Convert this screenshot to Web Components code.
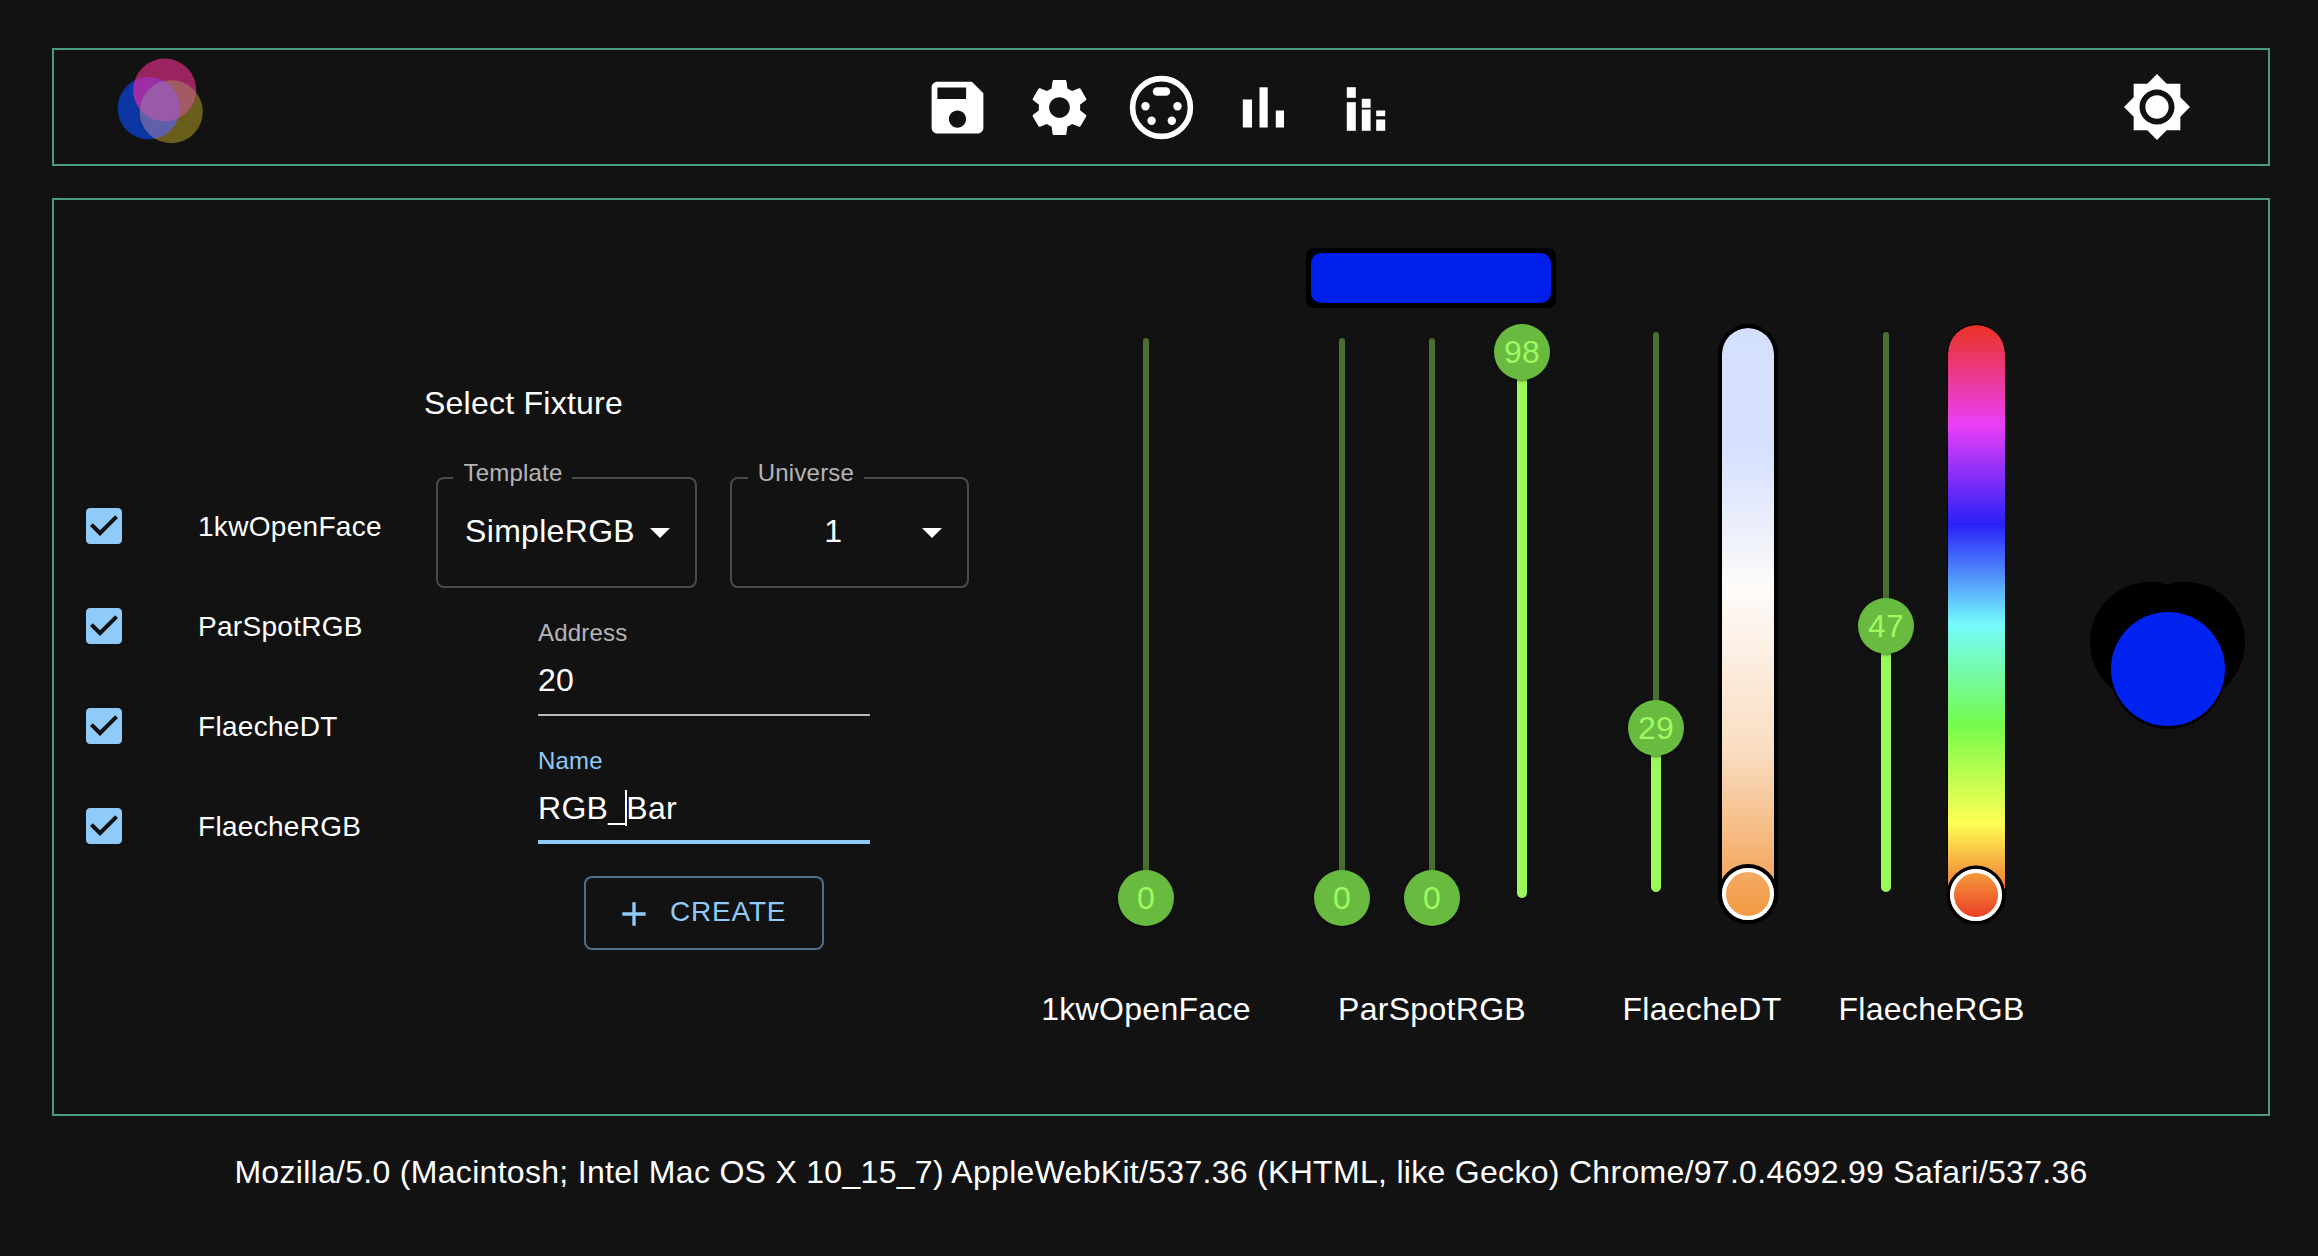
<!DOCTYPE html>
<html lang="en">
<head>
<meta charset="utf-8">
<title>Fixtures</title>
<style>
html,body{margin:0;padding:0;background:#121212;overflow:hidden}
body{height:1256px}
</style>
</head>
<body>
<fx-app></fx-app>
<script>
function def(name, css, html, attrs){
  customElements.define(name, class extends HTMLElement{
    connectedCallback(){
      if(this.shadowRoot) return;
      const root=this.attachShadow({mode:'open'});
      root.innerHTML='<style>'+css+'</style>'+html(this);
    }
  });
}
const ICONS={
  save:'<path fill="#fff" d="M17 3H5c-1.11 0-2 .9-2 2v14c0 1.1.89 2 2 2h14c1.1 0 2-.9 2-2V7l-4-4zm-5 16c-1.66 0-3-1.34-3-3s1.34-3 3-3 3 1.34 3 3-1.34 3-3 3zm3-10H5V5h10v4z"/>',
  gear:'<path fill="#fff" d="M19.14 12.94c.04-.3.06-.61.06-.94 0-.32-.02-.64-.07-.94l2.03-1.58c.18-.14.23-.41.12-.61l-1.92-3.32c-.12-.22-.37-.29-.59-.22l-2.39.96c-.5-.38-1.03-.7-1.62-.94l-.36-2.54c-.04-.24-.24-.41-.48-.41h-3.84c-.24 0-.43.17-.47.41l-.36 2.54c-.59.24-1.13.57-1.62.94l-2.39-.96c-.22-.08-.47 0-.59.22L2.74 8.87c-.12.21-.08.47.12.61l2.03 1.58c-.05.3-.09.63-.09.94s.02.64.07.94l-2.03 1.58c-.18.14-.23.41-.12.61l1.92 3.32c.12.22.37.29.59.22l2.39-.96c.5.38 1.03.7 1.62.94l.36 2.54c.05.24.24.41.48.41h3.84c.24 0 .44-.17.47-.41l.36-2.54c.59-.24 1.13-.56 1.62-.94l2.39.96c.22.08.47 0 .59-.22l1.92-3.32c.12-.22.07-.47-.12-.61l-2.01-1.58zM12 15.6c-1.98 0-3.6-1.62-3.6-3.6s1.62-3.6 3.6-3.6 3.6 1.62 3.6 3.6-1.62 3.6-3.6 3.6z"/>',
  sun:'<path fill="#fff" d="M20 8.69V4h-4.69L12 .69 8.69 4H4v4.69L.69 12 4 15.31V20h4.69L12 23.31 15.31 20H20v-4.69L23.31 12 20 8.69zM12 18c-3.31 0-6-2.69-6-6s2.69-6 6-6 6 2.69 6 6-2.69 6-6 6zm0-10c-2.21 0-4 1.79-4 4s1.79 4 4 4 4-1.79 4-4-1.79-4-4-4z"/>'
};
const PX={
  dmx:'<circle cx="34.5" cy="34.5" r="28.9" fill="none" stroke="#fff" stroke-width="5.6"/><rect x="25.8" y="14.2" width="17.4" height="8.6" rx="4.3" fill="#fff"/><circle cx="18.5" cy="33.2" r="4.2" fill="#fff"/><circle cx="50.5" cy="33.2" r="4.2" fill="#fff"/><circle cx="24.6" cy="47.8" r="4.2" fill="#fff"/><circle cx="44.8" cy="47.8" r="4.2" fill="#fff"/>',
  bars:'<g fill="#fff"><rect x="13.8" y="26.5" width="9.2" height="28"/><rect x="30.5" y="14.3" width="8.2" height="40.2"/><rect x="46.8" y="37.5" width="8.2" height="17"/></g>',
  levels:'<g fill="#fff"><rect x="15.8" y="14.2" width="9" height="10.6"/><rect x="15.8" y="29.2" width="9" height="28.6"/><rect x="30.8" y="25.8" width="8.8" height="9"/><rect x="30.8" y="36.5" width="8.8" height="21.3"/><rect x="45.2" y="37.5" width="9" height="5.7"/><rect x="45.2" y="46.5" width="9" height="11.3"/></g>'
};

def('fx-icon',':host{display:block;flex:none;line-height:0}svg{display:block}',h=>{
  const n=h.getAttribute('name'), s=h.getAttribute('size')||69;
  return ICONS[n]?`<svg width="${s}" height="${s}" viewBox="0 0 24 24">${ICONS[n]}</svg>`
                 :`<svg width="${s}" height="${s}" viewBox="0 0 69 69">${PX[n]}</svg>`;
});

def('fx-logo',':host{display:block;margin-left:46px;line-height:0}',()=>`
<svg width="120" height="114" viewBox="0 0 120 114">
<defs>
<clipPath id="p"><circle cx="64.7" cy="40" r="31.5"/></clipPath>
<clipPath id="b"><circle cx="48.8" cy="58.2" r="31.2"/></clipPath>
</defs>
<circle cx="48.8" cy="58.2" r="31.2" fill="#0a35a2"/>
<circle cx="71.3" cy="61.7" r="31.5" fill="#6a5e1c"/>
<circle cx="64.7" cy="40" r="31.5" fill="#9b235f"/>
<g clip-path="url(#p)"><circle cx="48.8" cy="58.2" r="31.2" fill="#9c2fa6"/><circle cx="71.3" cy="61.7" r="31.5" fill="#a35a62"/></g>
<g clip-path="url(#b)"><circle cx="71.3" cy="61.7" r="31.5" fill="#6060aa"/></g>
<g clip-path="url(#b)"><g clip-path="url(#p)"><circle cx="71.3" cy="61.7" r="31.5" fill="#9a5aa8"/></g></g>
</svg>`);

def('fx-topbar',`
:host{display:grid;grid-template-columns:1fr auto 1fr;align-items:center;box-sizing:border-box;height:118px;border:2px solid #4a9a7c}
.mid{display:flex;gap:33px}
.end{justify-self:end;margin-right:76px}`,()=>`
<fx-logo></fx-logo>
<div class="mid">
<fx-icon name="save"></fx-icon><fx-icon name="gear"></fx-icon><fx-icon name="dmx"></fx-icon><fx-icon name="bars"></fx-icon><fx-icon name="levels"></fx-icon>
</div>
<div class="end"><fx-icon name="sun" size="70"></fx-icon></div>`);

def('fx-check-row',`
:host{display:flex;align-items:center;height:36px;font-size:28px;color:#fff;white-space:nowrap}
svg{display:block;width:48px;height:48px;margin:-6px;flex:none}
span{margin-left:76px;line-height:36px;padding-top:1px}`,h=>`
<svg viewBox="0 0 24 24"><path fill="#90caf9" d="M19 3H5c-1.11 0-2 .9-2 2v14c0 1.1.89 2 2 2h14c1.11 0 2-.9 2-2V5c0-1.1-.89-2-2-2zm-9 14l-5-5 1.41-1.41L10 14.17l7.59-7.59L19 8l-9 9z"/></svg>
<span><slot></slot></span>`);

def('fx-list',`
:host{display:flex;flex-direction:column;gap:64px;flex:0 0 338px;padding:308px 0 0 32px;box-sizing:content-box}`,()=>`<slot></slot>`);

def('fx-select',`
:host{display:flex;align-items:center;position:relative;box-sizing:border-box;height:110.6px;border:2px solid #4a4a4a;border-radius:8px;padding-left:26.4px;color:#fff;font-size:32px}
.lab{position:absolute;left:15.4px;top:-18px;padding:0 10px;height:24px;line-height:24px;font-size:24px;letter-spacing:.2px;color:rgba(255,255,255,.7);background:#121212;white-space:nowrap}
.val{flex:1;text-align:center;white-space:nowrap;margin-top:-2px}
svg{display:block;width:48px;height:48px;margin-right:11.5px;flex:none}`,h=>`
<span class="lab">${h.getAttribute('label')}</span>
<span class="val">${h.getAttribute('value')}</span>
<svg viewBox="0 0 24 24"><path fill="#fff" d="M7 10l5 5 5-5z"/></svg>`);

def('fx-field',`
:host{display:block;width:332px;color:#fff}
.lab{display:block;font-size:24px;line-height:30px;letter-spacing:.2px;color:rgba(255,255,255,.7)}
:host([focused]) .lab{color:#90caf9}
.val{display:flex;align-items:center;height:48px;margin-top:9px;font-size:32px;white-space:pre}
.line{height:2px;margin-top:9px;background:rgba(255,255,255,.7)}
:host([focused]) .line{height:4px;margin-top:7px;background:#90caf9}
i{display:inline-block;width:2px;height:36px;background:#fff;margin:0 -1px;vertical-align:-7px;position:relative;z-index:1}`,h=>{
  const v=h.getAttribute('value'),c=h.getAttribute('caret');
  const t=c?v.slice(0,+c)+'<i></i>'+v.slice(+c):v;
  return `<span class="lab">${h.getAttribute('label')}</span><div class="val"><span>${t}</span></div><div class="line"></div>`;
});

def('fx-create',`
:host{display:flex;align-items:center;box-sizing:border-box;width:240px;height:74px;border:2px solid rgba(144,202,249,.5);border-radius:8px;padding-left:28px;color:#90caf9;font-size:28px;letter-spacing:.8px}
svg{display:block;width:40px;height:40px;margin:2px 16px 0 0;flex:none}
span{margin-top:-1px}`,()=>`
<svg viewBox="0 0 24 24"><path fill="#90caf9" d="M19 13h-6v6h-2v-6H5v-2h6V5h2v6h6v2z"/></svg><span>CREATE</span>`);

def('fx-form',`
:host{display:flex;flex-direction:column;align-items:center;flex:0 0 560px;padding-top:183px;color:#fff}
h2{align-self:flex-start;margin:0;font-weight:400;font-size:32px;line-height:40px;letter-spacing:.24px}
.sel{display:flex;gap:33.3px;margin:54px 2.5px 0 0}
.addr{margin-top:30.4px}
.name{margin-top:30px}
fx-create{margin-top:32px}`,()=>`
<h2>Select Fixture</h2>
<div class="sel">
<fx-select label="Template" value="SimpleRGB" style="width:261px"></fx-select>
<fx-select label="Universe" value="1" style="width:239px"></fx-select>
</div>
<fx-field class="addr" label="Address" value="20"></fx-field>
<fx-field class="name" label="Name" value="RGB_Bar" caret="4" focused></fx-field>
<fx-create></fx-create>`);

def('fx-fader',`
:host{display:flex;justify-content:center;width:90px;flex:none}
.track{position:relative;width:6px;height:560px;background:#4a6f2f;border-radius:3px}
.active{position:absolute;left:-2px;bottom:0;width:10px;background:#99fa5a;border-radius:5px}
.thumb{position:absolute;left:50%;width:56px;height:56px;border-radius:50%;background:#68bb3e;color:#9ff962;font-size:32px;line-height:56px;text-align:center;transform:translate(-50%,50%);box-shadow:0 3px 1px -2px rgba(0,0,0,.2),0 2px 2px 0 rgba(0,0,0,.14),0 1px 5px 0 rgba(0,0,0,.12)}`,h=>{
  const o=+h.getAttribute('off');
  return `<div class="track"><div class="active" style="height:${o}px"></div><div class="thumb" style="bottom:${o}px">${h.getAttribute('value')}</div></div>`;
});

def('fx-tone',`
:host{display:block;position:relative;flex:none;box-sizing:border-box;height:600px;border-style:solid;border-color:#000;border-radius:30px;background-clip:padding-box}
:host([kind=dt]){width:60px;border-width:4px;margin-left:17px;background-image:linear-gradient(#d3dffe 0%,#d8e2fe 22%,#fefbf9 44%,#f9dcc0 72%,#f29740 100%)}
:host([kind=rgb]){width:59px;border-width:1.5px;margin-left:15.5px;background-image:linear-gradient(#ea3323 0%,#ea3ff7 16.67%,#2a20f8 33.33%,#75fbfd 50%,#75fb4c 66.67%,#ffff54 83.33%,#ea3323 100%)}
.h{position:absolute;left:50%;bottom:0;box-sizing:border-box;width:52px;height:52px;border:4px solid #fff;border-radius:50%;transform:translateX(-50%);box-shadow:0 0 0 4px #000}
:host([kind=rgb]) .h{bottom:2.5px;box-shadow:0 0 0 3.4px #000}`,()=>`<div class="h"></div>`);

def('fx-swatch',`
:host{display:block;box-sizing:border-box;width:250px;height:60px;padding:5px;background:#000;border-radius:8px}
div{height:100%;background:#001fea;border-radius:10px}`,()=>`<div></div>`);

def('fx-group',`
:host{display:flex;flex-direction:column;align-items:center;justify-content:flex-end;flex:none;color:#fff;font-size:32px}
.row{display:flex;align-items:flex-start;align-self:flex-start}
.lab{height:40px;line-height:40px;white-space:nowrap}
::slotted(fx-swatch){margin:0 2px 30px 0}`,h=>`
<slot name="top"></slot>
<div class="row" style="padding-bottom:${h.getAttribute('low')}px"><slot></slot></div>
<div class="lab" style="margin-top:${h.getAttribute('gap')}px">${h.getAttribute('label')}</div>`);

def('fx-picker',`
:host{display:block;flex:none;line-height:0}`,()=>`
<svg width="156" height="150" viewBox="0 0 156 150">
<circle cx="60" cy="60" r="60" fill="#000"/><circle cx="95" cy="60" r="60" fill="#000"/><circle cx="78" cy="89" r="58" fill="#000"/>
<circle cx="78" cy="87" r="57" fill="#0023f0"/></svg>`);

def('fx-main',`
:host{display:flex;align-items:flex-start;box-sizing:border-box;height:918px;margin-top:32px;border:2px solid #4a9a7c}`,()=>`
<fx-list>
<fx-check-row>1kwOpenFace</fx-check-row>
<fx-check-row>ParSpotRGB</fx-check-row>
<fx-check-row>FlaecheDT</fx-check-row>
<fx-check-row>FlaecheRGB</fx-check-row>
</fx-list>
<fx-form></fx-form>
<fx-desk></fx-desk>`);

def('fx-desk',`
:host{display:flex;align-items:flex-end;height:781px;margin-top:48px;margin-left:58px}`,()=>`
<fx-group label="1kwOpenFace" low="28" gap="63" style="width:208px">
<fx-fader value="0" off="0" style="margin-left:59px"></fx-fader>
</fx-group>
<fx-group label="ParSpotRGB" low="28" gap="63" style="width:270px;margin-left:47px">
<fx-swatch slot="top"></fx-swatch>
<fx-fader value="0" off="0"></fx-fader><fx-fader value="0" off="0"></fx-fader><fx-fader value="98" off="546"></fx-fader>
</fx-group>
<fx-group label="FlaecheDT" low="0" gap="65" style="width:182px;margin-left:44px">
<fx-fader value="29" off="164" style="margin-top:8px"></fx-fader><fx-tone kind="dt"></fx-tone>
</fx-group>
<fx-group label="FlaecheRGB" low="0" gap="65" style="width:181px;margin-left:48px">
<fx-fader value="47" off="266" style="margin-top:8px"></fx-fader><fx-tone kind="rgb"></fx-tone>
</fx-group>
<fx-picker style="align-self:flex-start;margin-top:334px;margin-left:68px"></fx-picker>`);

def('fx-app',`
:host{display:block;box-sizing:border-box;padding:48px 48px 0 52px;font-family:"Liberation Sans",Arial,Helvetica,sans-serif;color:#fff;letter-spacing:.3px}
.foot{margin-top:36px;height:40px;line-height:40px;font-size:32px;text-align:center;white-space:nowrap}`,()=>`
<fx-topbar></fx-topbar>
<fx-main></fx-main>
<div class="foot">Mozilla/5.0 (Macintosh; Intel Mac OS X 10_15_7) AppleWebKit/537.36 (KHTML, like Gecko) Chrome/97.0.4692.99 Safari/537.36</div>`);
</script>
</body>
</html>
